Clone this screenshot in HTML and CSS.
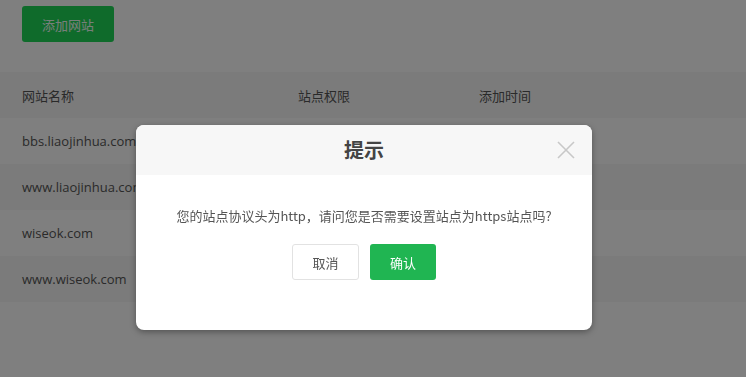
FILE: index.html
```html
<!DOCTYPE html>
<html lang="zh">
<head>
<meta charset="utf-8">
<title>站点列表</title>
<link rel="stylesheet" href="styles.css">
</head>
<body>
<div class="page">
  <div class="toolbar">
    <button class="btn-add">添加网站</button>
  </div>
  <table class="sites">
    <thead>
      <tr><th class="c-name">网站名称</th><th class="c-perm">站点权限</th><th class="c-time">添加时间</th></tr>
    </thead>
    <tbody>
      <tr><td>bbs.liaojinhua.com</td><td></td><td></td></tr>
      <tr class="alt"><td>www.liaojinhua.com</td><td></td><td></td></tr>
      <tr><td>wiseok.com</td><td></td><td></td></tr>
      <tr class="alt"><td>www.wiseok.com</td><td></td><td></td></tr>
    </tbody>
  </table>
</div>
<div class="mask"></div>
<div class="dialog">
  <div class="dialog-head">
    <span class="dialog-title">提示</span>
    <svg class="dialog-close" width="18" height="18" viewBox="0 0 18 18"><path d="M1 1L17 17M17 1L1 17" stroke="#c8c8c8" stroke-width="1.6" fill="none"/></svg>
  </div>
  <div class="dialog-body">
    <p class="dialog-msg">您的站点协议头为http，请问您是否需要设置站点为https站点吗?</p>
    <div class="dialog-actions">
      <button class="btn-cancel">取消</button>
      <button class="btn-ok">确认</button>
    </div>
  </div>
</div>
</body>
</html>
```
FILE: styles.css
```css
html, body {
  margin: 0;
  padding: 0;
  background: #fff;
  font-family: "Open Sans", "Noto Sans CJK SC", sans-serif;
  font-size: 13px;
  color: #555;
}
.page {
  width: 746px;
}
.toolbar {
  padding: 6px 22px 30px;
}
.btn-add {
  width: 92px;
  height: 36px;
  border: 0;
  border-radius: 3px;
  background: #1ed656;
  color: #f0fff6;
  font-family: "Noto Sans CJK SC", sans-serif;
  font-size: 13px;
  padding: 0;
}
.sites {
  width: 100%;
  border-collapse: collapse;
}
.sites th, .sites td {
  height: 46px;
  padding: 0 0 0 22px;
  text-align: left;
  font-weight: normal;
  white-space: nowrap;
}
.sites thead tr { background: #f6f6f6; }
.sites th { font-family: "Noto Sans CJK SC", sans-serif; }
.sites tr.alt { background: #f6f6f6; }
.c-name { width: 254px; }
.c-perm { width: 159px; }
.mask {
  position: fixed;
  inset: 0;
  background: rgba(0, 0, 0, 0.5);
}
.dialog {
  position: absolute;
  left: 136px;
  top: 125px;
  width: 456px;
  height: 205px;
  background: #fff;
  border-radius: 8px;
  overflow: hidden;
  box-shadow: 0 2px 6px rgba(0, 0, 0, 0.35);
  font-family: "Noto Sans CJK SC", sans-serif;
}
.dialog-head {
  position: relative;
  height: 50px;
  background: #f7f7f7;
  display: flex;
  align-items: center;
  justify-content: center;
}
.dialog-title {
  font-size: 20px;
  font-weight: bold;
  color: #444;
  line-height: 1;
}
.dialog-close {
  position: absolute;
  right: 17px;
  top: 16px;
}
.dialog-body {
  padding-top: 32px;
  display: flex;
  flex-direction: column;
  align-items: center;
}
.dialog-msg {
  margin: 0;
  font-size: 13px;
  line-height: 18px;
  color: #555;
  letter-spacing: 0;
}
.dialog-actions {
  display: flex;
  gap: 11px;
  margin-top: 19px;
}
.btn-cancel, .btn-ok {
  height: 36px;
  border-radius: 3px;
  font-family: "Noto Sans CJK SC", sans-serif;
  font-size: 13px;
  padding: 0;
}
.btn-cancel {
  width: 67px;
  background: #fff;
  border: 1px solid #e2e2e2;
  color: #555;
}
.btn-ok {
  width: 66px;
  background: #20b552;
  border: 0;
  color: #fff;
}
```
